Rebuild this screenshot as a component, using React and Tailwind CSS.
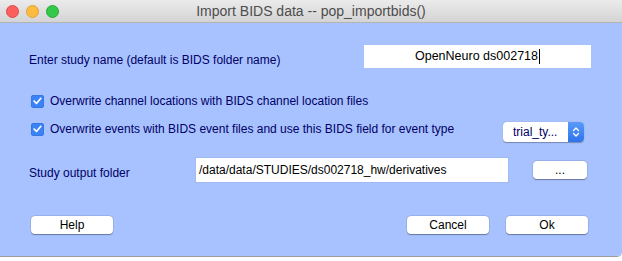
import React from "react";

const FONT = { fontFamily: '"Liberation Sans", Arial, sans-serif' };

function Check() {
  return (
    <span className="flex h-[13px] w-[13px] shrink-0 items-center justify-center rounded-[3px] bg-[#3b82f6] shadow-[inset_0_0_0_0.5px_#2f6fd8]">
      <svg width="9" height="8" viewBox="0 0 9 8" fill="none">
        <path d="M1.2 4.2 L3.5 6.5 L7.8 1.3" stroke="white" strokeWidth="1.7" strokeLinecap="round" strokeLinejoin="round" />
      </svg>
    </span>
  );
}

function Button({ children, className = "" }) {
  return (
    <button
      className={`flex h-[18px] items-center justify-center rounded-[4px] bg-white text-[12px] text-black shadow-[0_0.5px_1px_rgba(0,0,0,0.35),0_0_0_0.5px_rgba(0,0,0,0.12)] ${className}`}
    >
      {children}
    </button>
  );
}

export default function App() {
  return (
    <div className="h-[261px] w-[622px] overflow-hidden bg-white" style={FONT}>
      {/* Window */}
      <div className="flex h-[257px] w-full flex-col overflow-hidden rounded-br-[5px] border-b border-[#9c9c9c]">
        {/* Title bar */}
        <div className="relative flex h-[23px] shrink-0 items-center justify-center border-b border-[#b4b4b4] bg-gradient-to-b from-[#ebebeb] to-[#d4d4d4]">
          <div className="absolute left-[6px] top-[5px] flex gap-[7px]">
            <span className="h-[13px] w-[13px] rounded-full border border-[#de4b46] bg-[#fc605c]" />
            <span className="h-[13px] w-[13px] rounded-full border border-[#dea236] bg-[#fdbc40]" />
            <span className="h-[13px] w-[13px] rounded-full border border-[#27aa35] bg-[#34c84a]" />
          </div>
          <span className="text-[14px] text-[#4d4d4d]">Import BIDS data -- pop_importbids()</span>
        </div>

        {/* Body */}
        <div className="flex flex-1 flex-col bg-[#a8c2ff] text-[12px] leading-[15px] text-[#000066]">
          {/* Study name */}
          <div className="mt-[22px] flex items-start pl-[29px] pr-[31px]">
            <span className="mt-[8px]">Enter study name (default is BIDS folder name)</span>
            <div className="ml-auto flex h-[23px] w-[227px] items-center justify-center bg-white text-[12.5px] text-black">
              <span>OpenNeuro ds002718</span>
              <span className="ml-[1px] h-[15px] w-[1px] bg-black" />
            </div>
          </div>

          {/* Checkbox 1 */}
          <label className="mt-[26px] flex h-[14px] items-center gap-[6px] pl-[31px]">
            <Check />
            <span>Overwrite channel locations with BIDS channel location files</span>
          </label>

          {/* Checkbox 2 + popup */}
          <div className="mt-[13px] flex items-start pl-[31px] pr-[38px]">
            <label className="mt-[1px] flex h-[14px] items-center gap-[6px]">
              <Check />
              <span>Overwrite events with BIDS event files and use this BIDS field for event type</span>
            </label>
            <div className="ml-auto mt-[1px] flex h-[20px] w-[81px] overflow-hidden rounded-[4px] bg-white shadow-[0_0.5px_1px_rgba(0,0,0,0.3)]">
              <span className="flex flex-1 items-center pl-[10px] text-[#000066]">trial_ty...</span>
              <span className="flex w-[16px] items-center justify-center bg-gradient-to-b from-[#5a9af8] to-[#2f73ec]">
                <svg width="8" height="12" viewBox="0 0 8 12" fill="none">
                  <path d="M1.5 4.5 L4 2 L6.5 4.5 M1.5 7.5 L4 10 L6.5 7.5" stroke="white" strokeWidth="1.4" strokeLinecap="round" strokeLinejoin="round" />
                </svg>
              </span>
            </div>
          </div>

          {/* Output folder */}
          <div className="mt-[16px] flex items-start pl-[29px] pr-[35px]">
            <span className="mt-[8px] w-[167px]">Study output folder</span>
            <div className="flex h-[24px] w-[312px] items-center bg-white pl-[3px] text-[12px] text-black shadow-[0_0_0_0.5px_rgba(0,0,0,0.08)]">
              /data/data/STUDIES/ds002718_hw/derivatives
            </div>
            <Button className="ml-auto mt-[3px] w-[54px]">...</Button>
          </div>

          {/* Buttons */}
          <div className="mt-[34px] flex items-center pl-[31px] pr-[34px]">
            <Button className="w-[82px]">Help</Button>
            <Button className="ml-auto w-[82px]">Cancel</Button>
            <Button className="ml-[17px] w-[82px]">Ok</Button>
          </div>
        </div>
      </div>

      {/* Window behind */}
      <div className="h-[4px] overflow-hidden pl-[8px]">
        <div className="text-[12px] leading-[12px] text-black">
          ~~~~~ ~~~~~~~~~~~~ ~~~~ ~~~~~~~~~ ~~
        </div>
      </div>
    </div>
  );
}
